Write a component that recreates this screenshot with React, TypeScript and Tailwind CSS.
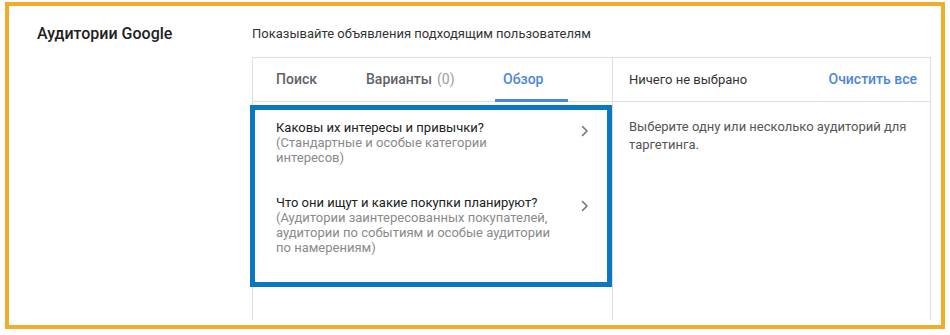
import React from 'react';

// Google Ads – audience targeting block, annotated with frame + highlight
const ChevronRight: React.FC = () => (
  <svg width="8" height="12" viewBox="0 0 8 12" fill="none" className="shrink-0">
    <path d="M1.5 1.5L6 6L1.5 10.5" stroke="#757575" strokeWidth="1.6" strokeLinecap="round" strokeLinejoin="round" />
  </svg>
);

const categories = [
  {
    title: 'Каковы их интересы и привычки?',
    lines: ['(Стандартные и особые категории', 'интересов)'],
  },
  {
    title: 'Что они ищут и какие покупки планируют?',
    lines: [
      '(Аудитории заинтересованных покупателей,',
      'аудитории по событиям и особые аудитории',
      'по намерениям)',
    ],
  },
];

export default function App() {
  return (
    <div
      className="w-[950px] h-[335px] bg-white pt-[2px] pl-[5px] overflow-hidden"
      style={{ fontFamily: 'Roboto, "Liberation Sans", Arial, sans-serif' }}
    >
      <div className="w-[940px] h-[327px] border-4 border-[#f1ac29] bg-white flex overflow-hidden">
        {/* Section title */}
        <div className="w-[243px] shrink-0 pl-[28px] pt-[18px]">
          <h2 className="text-[16px] leading-[20px] font-medium text-[#212121]">Аудитории Google</h2>
        </div>

        {/* Section body */}
        <div className="flex-1 flex flex-col">
          <p className="pt-[19px] text-[13px] leading-[18px] text-[#333]">
            Показывайте объявления подходящим пользователям
          </p>

          <div className="mt-[14px] w-[679px] h-[263px] border border-b-0 border-[#dedede] flex">
            {/* Left: tabs + browse list */}
            <div className="w-[359px] shrink-0 flex flex-col">
              <div className="h-[44px] border-b border-[#dedede] flex items-stretch text-[14px] font-medium text-[#5f6368]">
                <div className="w-[113px] pl-[23px] flex items-center">Поиск</div>
                <div className="w-[129px] flex items-center">
                  Варианты <span className="ml-[5px] font-normal text-[#9e9e9e]">(0)</span>
                </div>
                <div className="relative w-[73px] pl-[8px] flex items-center text-[#4b86de]">
                  Обзор
                  <span className="absolute left-0 right-0 bottom-[-1px] h-[3px] bg-[#4b86de]" />
                </div>
              </div>

              <div className="mt-[3px] -ml-[3px] w-[362px] h-[182px] border-[5px] border-[#0a77c2] pl-[21px] pr-[18px] pt-[10px] flex flex-col gap-[30px]">
                {categories.map((c) => (
                  <div key={c.title} className="flex items-start justify-between">
                    <div className="text-[13px] leading-[15px] whitespace-nowrap">
                      <div className="text-[#212121]">{c.title}</div>
                      {c.lines.map((l) => (
                        <div key={l} className="text-[#8a8a8a]">{l}</div>
                      ))}
                    </div>
                    <div className="pt-[5px]">
                      <ChevronRight />
                    </div>
                  </div>
                ))}
              </div>
            </div>

            {/* Right: selection */}
            <div className="flex-1 border-l border-[#dedede] flex flex-col">
              <div className="h-[44px] border-b border-[#dedede] pl-[16px] pr-[13px] flex items-center justify-between">
                <span className="text-[13px] text-[#333]">Ничего не выбрано</span>
                <button className="text-[14px] font-medium text-[#4b86de]">Очистить все</button>
              </div>
              <p className="pl-[16px] pt-[16px] text-[13px] leading-[18px] text-[#555]">
                Выберите одну или несколько аудиторий для
                <br />
                таргетинга.
              </p>
            </div>
          </div>
        </div>
      </div>
    </div>
  );
}
